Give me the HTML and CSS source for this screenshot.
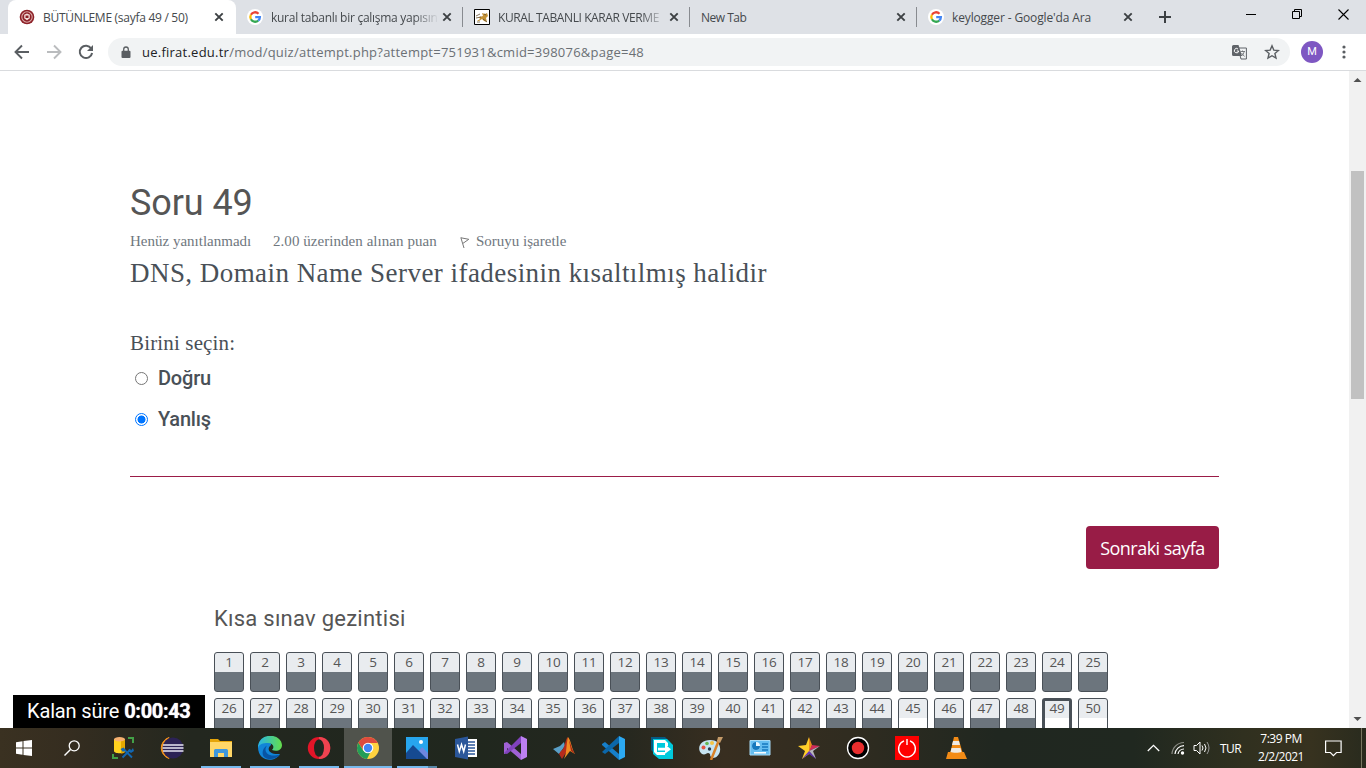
FILE: index.html
```
<!DOCTYPE html>
<html lang="tr">
<head>
<meta charset="utf-8">
<title>BÜTÜNLEME (sayfa 49 / 50)</title>
<link rel="stylesheet" href="styles.css">
</head>
<body>
<svg width="0" height="0" class="defs">
  <defs>
    <symbol id="x" viewBox="0 0 10 10"><path d="M1.3 1.3l7.4 7.4M8.7 1.3L1.3 8.7" stroke="#3c4043" stroke-width="1.9"/></symbol>
    <symbol id="google" viewBox="0 0 16 16"><circle cx="8" cy="8" r="8" fill="#fff"/><g fill="none" stroke-width="2.3"><path d="M3.9 5.7A4.8 4.8 0 0 1 11.5 4.7" stroke="#ea4335"/><path d="M3.9 10.3a4.8 4.8 0 0 1 0-4.6" stroke="#fbbc05"/><path d="M11.2 11.6a4.8 4.8 0 0 1-7.3-1.3" stroke="#34a853"/><path d="M8.2 8.1h4.7c0 1.5-.6 2.7-1.7 3.5" stroke="#4285f4"/></g></symbol>
  </defs>
</svg>
<header class="tabs">
  <div class="tab active">
    <svg class="fav" viewBox="0 0 16 16"><circle cx="8" cy="8" r="7.3" fill="#8c2027"/><circle cx="8" cy="8" r="5.2" fill="none" stroke="#dcaaa9" stroke-width="1.1"/><path d="M5.2 5.8L8 4.6l2.8 1.2v3.4L8 11.3 5.2 9.200z" fill="#f5dfdc"/><path d="M6.500 6.500h3v2.500h-3z" fill="#8c2027"/></svg>
    <span class="title t1">BÜTÜNLEME (sayfa 49 / 50)</span><svg class="close"><use href="#x"/></svg>
  </div>
  <div class="tab"><svg class="fav"><use href="#google"/></svg><span class="title t2 fade">kural tabanlı bir çalışma yapısın</span><svg class="close"><use href="#x"/></svg></div>
  <div class="tab sep">
    <svg class="fav" viewBox="0 0 16 16"><path d="M.5.5h15v15H.5z" fill="#fff" stroke="#000"/><path d="M3 12l3-2-1-2 4-1-1-3 3 1 2-1 1 3-2 2 1 4-3-1-2-2-3 2z" fill="#c39238"/><path d="M2 7l4-2M2 9l5-1M9 10l4 3M10 5l2 1M3 13h3" stroke="#665030" stroke-width=".8" fill="none"/></svg>
    <span class="title t3 fade">KURAL TABANLI KARAR VERME</span><svg class="close"><use href="#x"/></svg>
  </div>
  <div class="tab sep blank"><span class="title t4">New Tab</span><svg class="close"><use href="#x"/></svg></div>
  <div class="tab sep"><svg class="fav"><use href="#google"/></svg><span class="title t5">keylogger - Google'da Ara</span><svg class="close"><use href="#x"/></svg></div>
  <div class="newtab"><svg width="12" height="12" viewBox="0 0 12 12"><path d="M6 0v12M0 6h12" stroke="#3c4043" stroke-width="2"/></svg></div>
  <div class="winctl">
    <svg width="11" height="11"><path d="M0 5.500h10" stroke="#000"/></svg>
    <svg width="11" height="11"><path d="M.5 2.500h7v7h-7zM2.500 2.500v-2h7v7h-2" fill="none" stroke="#000"/></svg>
    <svg width="11" height="11"><path d="M.5.5l10 10M10.500.5l-10 10" stroke="#000" stroke-width="1.100"/></svg>
  </div>
</header>
<div class="toolbar">
  <div class="navs">
    <svg width="16" height="16" viewBox="0 0 16 16"><path d="M15 8H2M8 1.500L1.500 8 8 14.500" fill="none" stroke="#5a5e62" stroke-width="1.900"/></svg>
    <svg width="16" height="16" viewBox="0 0 16 16"><path d="M1 8h13M8 1.500L14.500 8 8 14.500" fill="none" stroke="#babcbe" stroke-width="1.900"/></svg>
    <svg width="16" height="16" viewBox="0 0 16 16"><path d="M13.200 4.500A6.200 6.200 0 1 0 14.100 9" fill="none" stroke="#5a5e62" stroke-width="2"/><path d="M15 1v6H9z" fill="#5a5e62"/></svg>
  </div>
  <div class="omni">
    <svg class="lock" width="10" height="13" viewBox="0 0 10 13"><path d="M2.700 6V3.300a2.300 2.300 0 0 1 4.600 0V6" fill="none" stroke="#5a5e62" stroke-width="1.300"/><rect x=".5" y="4.800" width="9" height="7.200" rx="1" fill="#5a5e62"/></svg>
    <span class="url"><b>ue.firat.edu.tr</b>/mod/quiz/attempt.php?attempt=751931&amp;cmid=398076&amp;page=48</span>
    <svg class="translate" width="15" height="15" viewBox="0 0 15 15"><path d="M6 3h8.400v11H9z" fill="#f1f3f4" stroke="#5f6368"/><path d="M1.500 0h5l3.500 11H1.500A1.500 1.500 0 0 1 0 9.500v-8A1.500 1.500 0 0 1 1.500 0z" fill="#5f6368"/><path d="M6 4a2.200 2.200 0 1 0 .7 2H4.800" fill="none" stroke="#fff"/><path d="M8.500 6.500h4.500M10.500 5.500v1M12 6.500c0 2-1.500 3.500-2.500 4.500M9.500 8l3 3.500" fill="none" stroke="#5f6368" stroke-width=".8"/></svg>
    <svg width="16" height="16" viewBox="0 0 16 16"><path d="M8 1.800l1.800 4.300 4.600.4-3.500 3 1.100 4.600L8 11.700l-4 2.400 1.100-4.600-3.500-3 4.600-.4z" fill="none" stroke="#5a5e62" stroke-width="1.400"/></svg>
  </div>
  <span class="avatar">M</span>
  <svg class="dots" width="4" height="14"><g fill="#5a5e62"><circle cx="2" cy="2" r="1.600"/><circle cx="2" cy="7" r="1.600"/><circle cx="2" cy="12" r="1.600"/></g></svg>
</div>
<div class="view">
  <main class="page">
    <h2 class="qno">Soru 49</h2>
    <div class="info"><span class="i1">Henüz yanıtlanmadı</span><span class="i2">2.00 üzerinden alınan puan</span><svg class="flag" width="10" height="13" viewBox="0 0 10 13"><path d="M.8 1.500L4 12M1 1.800l7.800 1.500L3 7.300" fill="none" stroke="#777" stroke-width="1"/></svg><span class="i3">Soruyu işaretle</span></div>
    <p class="question">DNS, Domain Name Server ifadesinin kısaltılmış halidir</p>
    <p class="prompt">Birini seçin:</p>
    <label class="opt"><i class="radio"></i><span class="o1">Doğru</span></label>
    <label class="opt"><i class="radio on"></i><span class="o2">Yanlış</span></label>
    <div class="rule"></div>
    <div class="actions"><button class="next">Sonraki sayfa</button></div>
    <section class="quiznav">
      <h3 class="navtitle">Kısa sınav gezintisi</h3>
      <div class="grid">
        <a>1</a><a>2</a><a>3</a><a>4</a><a>5</a><a>6</a><a>7</a><a>8</a><a>9</a><a>10</a><a>11</a><a>12</a><a>13</a><a>14</a><a>15</a><a>16</a><a>17</a><a>18</a><a>19</a><a>20</a><a>21</a><a>22</a><a>23</a><a>24</a><a>25</a>
        <a>26</a><a>27</a><a>28</a><a>29</a><a>30</a><a>31</a><a>32</a><a>33</a><a>34</a><a>35</a><a>36</a><a>37</a><a>38</a><a>39</a><a>40</a><a>41</a><a>42</a><a>43</a><a>44</a><a class="open">45</a><a>46</a><a>47</a><a>48</a><a class="open current">49</a><a class="open">50</a>
      </div>
    </section>
  </main>
  <div class="scroll">
    <svg width="17" height="17"><path d="M4.500 11h8L8.500 7z" fill="#505050"/></svg>
    <div class="track"><div class="thumb"></div></div>
    <svg width="17" height="17"><path d="M4.500 6h8l-4 4z" fill="#505050"/></svg>
  </div>
  <div class="timer"><span class="k">Kalan süre</span><b>0:00:43</b></div>
</div>
<footer class="taskbar">
  <div class="item start"><svg width="16" height="16" viewBox="0 0 16 16"><path d="M0 2.200L6.500 1.300v6.200H0zM7.500 1.100L16 0v7.500H7.500zM0 8.500h6.500v6.200L0 13.800zM7.500 8.500H16V16l-8.500-1.100z" fill="#fff"/></svg></div>
  <div class="item search"><svg width="16" height="16" viewBox="0 0 16 16"><circle cx="10.200" cy="5.800" r="5" fill="none" stroke="#fff" stroke-width="1.300"/><path d="M6.500 9.500L.5 15.500" stroke="#fff" stroke-width="1.400"/></svg></div>
  <div class="item"><svg viewBox="0 0 24 24"><path d="M3 3v12c0 3 11 3 11 0V3z" fill="#ffd21e"/><path d="M10 3h4v13c-1 1-3 1.500-4 1.500z" fill="#e5a900"/><ellipse cx="8.500" cy="3.300" rx="5.500" ry="2.200" fill="#f6b070"/><path d="M17 2h5v5M2 18v4h5" fill="none" stroke="#43a047" stroke-width="2"/><path d="M11.500 21.500l8-8M13 13.500l8 8" stroke="#1268b3" stroke-width="1.900"/><path d="M9.500 13l3-1.500 2 2-2.500 2.500zM18 13l2 1.500 2-2.500 1 3-3 2-3-2z" fill="#1268b3"/></svg></div>
  <div class="item"><svg viewBox="0 0 24 24"><path d="M9 1.500a11 11 0 0 0 0 21C3 17 3 7 9 1.500z" fill="#f7941e" stroke="#f7941e"/><circle cx="13" cy="12" r="10.500" fill="#2c2255"/><path d="M3 9h20.500M2.500 12h21M3 15h20.500" stroke="#e8e6f2" stroke-width="1.600"/></svg></div>
  <div class="item run"><svg viewBox="0 0 24 24"><path d="M1 3h8l2 2h12v16H1z" fill="#e5a50a"/><path d="M1 6h22v15H1z" fill="#ffd768"/><path d="M5 21v-6.500q0-1.500 1.500-1.500h11q1.500 0 1.500 1.500V21h-4v-4H9v4z" fill="#3e97dd"/></svg></div>
  <div class="item run"><svg viewBox="0 0 24 24"><defs><linearGradient id="eg" x2="1"><stop stop-color="#28b5e8"/><stop offset="1" stop-color="#64dd4b"/></linearGradient></defs><path d="M0 11c1-6 14-7 13-2-5 4-2 10 9 9-5 9-22 8-22-7z" fill="#1185d8"/><path d="M0 10C2-4 23-3 24 9c0 5-5 7-10 5 3-3 1-7-4-7C5 7 1 8 0 12z" fill="url(#eg)"/><path d="M9 9.500c-4 5 0 13 13 9-5 7-20 6-17-4 .5-2 2-4 4-5z" fill="#0754a4"/></svg></div>
  <div class="item run"><svg viewBox="0 0 24 24"><ellipse cx="12" cy="12" rx="11.200" ry="11" fill="#e31528"/><path d="M12 1c15 0 15 22 0 22z" fill="#ef4350"/><ellipse cx="12" cy="12" rx="5" ry="8.700" fill="#202720"/></svg></div>
  <div class="item run focus"><svg viewBox="0 0 24 24"><circle cx="12" cy="12" r="11" fill="#ffd23f"/><path d="M2.300 6.800A11 11 0 0 1 21.800 7H12L7.500 14.500z" fill="#dd4b3e"/><path d="M2.300 6.800L7.500 15h7.500l-4 8A11 11 0 0 1 2.300 6.800z" fill="#239d58"/><circle cx="12" cy="12" r="5.300" fill="#fff"/><circle cx="12" cy="12" r="4.200" fill="#4285f4"/></svg></div>
  <div class="item run photos"><svg viewBox="0 0 24 24"><path d="M1 1h22v22H1z" fill="#27a6ee"/><path d="M12 17l5-6 6 6v6H12z" fill="#6e87df"/><path d="M1 17l7-8 14 14H1z" fill="#164a91"/><circle cx="16" cy="6" r="2" fill="#fff"/></svg></div>
  <div class="item"><svg viewBox="0 0 24 24"><path d="M12 3h11v18H12z" fill="#fff"/><path d="M14 6h7M14 9h7M14 12h7M14 15h7M14 18h7" stroke="#2b579a" stroke-width="1.300"/><path d="M1 3l13-2.500v23L1 21z" fill="#2b579a"/><path d="M3.500 8.500l1.800 7 2.200-7 2.200 7 1.800-7" fill="none" stroke="#fff" stroke-width="1.500"/></svg></div>
  <div class="item"><svg viewBox="0 0 24 24"><path d="M1 7l3-1 14 12V24L4 12v5l-3 1z" fill="#a061d6"/><path d="M1 17l17-17v7L4 18z" fill="#8042bd"/><path d="M18 0l6 3v18l-6 3z" fill="#bc80f2"/></svg></div>
  <div class="item"><svg viewBox="0 0 24 24"><path d="M1 13l7-3 4-4 1 4-6 8z" fill="#5a9fc7"/><path d="M9 15c4-2 4-12 7-14l-1 14-5 8-3-5z" fill="#b52b1c"/><path d="M16 1c3 3 4 13 7 17l-5-3-6 8c3-6 2-15 4-22z" fill="#f28b23"/><path d="M17 4c2 4 2 8 6 14l-4-3z" fill="#a92a17"/></svg></div>
  <div class="item"><svg viewBox="0 0 24 24"><path d="M1 8l3-2 14 12v6L1 9z" fill="#167fca"/><path d="M1 16L18 0v7L4 18z" fill="#0b67aa"/><path d="M18 0l6 3v18l-6 3z" fill="#2ca9f2"/></svg></div>
  <div class="item"><svg viewBox="0 0 24 24"><path d="M1 1h14l5 5v12H5l-4-4z" fill="#075982"/><path d="M3 3h14l6 6v14H9l-6-5z" fill="#00c9dc"/><path d="M4 4h11l3 3v3h-3V7H7v9h8v3H7l-3-3z" fill="#fff"/><path d="M8 11.800h7V8.500l6 4.700-6 4.600v-3.200H8z" fill="#fff"/></svg></div>
  <div class="item"><svg viewBox="0 0 24 24"><path d="M11 4C1 4-3 13 3 18c4 2 5-3 8 0 0 7 9 4 10-3S18 4 11 4z" fill="#c6e4f2"/><circle cx="8" cy="7.500" r="1.800" fill="#65b753"/><circle cx="13" cy="7" r="2" fill="#f4c445"/><circle cx="4.500" cy="11.500" r="2" fill="#e55443"/><circle cx="10.500" cy="13" r="1.700" fill="#26384a"/><path d="M20 4l-8 20" stroke="#d78128" stroke-width="2.500"/><path d="M18 5l1-4 5 0-3 6z" fill="#c59b69"/></svg></div>
  <div class="item"><svg viewBox="0 0 24 24"><path d="M2 4.500h20v14.500H2z" fill="#65bdf0" stroke="#a9dcf7"/><circle cx="8" cy="10" r="4" fill="#e8f6ff"/><path d="M8 10V6a4 4 0 1 0 4 4z" fill="#1678be"/><path d="M14 8h6M14 11h6M14 14h6" stroke="#1678be" stroke-width="1.300"/><path d="M6 16.800h12" stroke="#fff" stroke-width="1.500"/></svg></div>
  <div class="item"><svg viewBox="0 0 24 24"><path d="M12 1l-3 8-8 1 7 5-3 8 7-5z" fill="#ffcf29"/><path d="M12 1l3 8-3 9z" fill="#e88c1d"/><path d="M15 9l8 1-11 5z" fill="#cf2b59"/><path d="M23 10l-7 5 3 8-7-8z" fill="#b7b5be"/><path d="M12 15l7 8-7-5-7 5z" fill="#6335bc"/></svg></div>
  <div class="item"><svg viewBox="0 0 24 24"><circle cx="12" cy="12" r="10.500" fill="#000" stroke="#fff" stroke-width="1.300"/><circle cx="12" cy="12" r="6.200" fill="#e72d2d"/></svg></div>
  <div class="item"><svg viewBox="0 0 24 24"><path d="M0 0h24v24H0z" fill="#fe0000"/><path d="M9 4.800a8.400 8.400 0 1 0 6 0M12 3v6" fill="none" stroke="#fff" stroke-width="1.400"/></svg></div>
  <div class="item"><svg viewBox="0 0 24 24"><path d="M4 16h16l3 7H2z" fill="#f28b16"/><path d="M10 1h4l5 17c-2 2-11 2-13 0z" fill="#f28b16"/><path d="M9 5h6l1 4H8zM7.500 12h9l1 4c-2 1-9 1-11 0z" fill="#eeeae4"/></svg></div>
  <div class="tray">
    <svg width="13" height="8"><path d="M.8 7l5.700-5.700L12.200 7" fill="none" stroke="#fff" stroke-width="1.300"/></svg>
    <svg class="wifi" width="14" height="14"><g fill="none" stroke-width="1.200"><path d="M1 13A12 12 0 0 1 13 1.500" stroke="#8b8c85"/><path d="M4 13A9 9 0 0 1 13 4.700M7 13a6 6 0 0 1 6-5" stroke="#fff"/></g><circle cx="11.500" cy="12" r="1.700" fill="#fff"/></svg>
    <svg class="vol" width="17" height="14"><path d="M1 4.500h2.500L7 1v12L3.500 9.500H1z" fill="none" stroke="#fff"/><path d="M9 4.500q2 2.500 0 5M11.500 3q3 4 0 8" fill="none" stroke="#fff"/><path d="M14 1q4 6 0 12" fill="none" stroke="#999"/></svg>
    <span class="lang">TUR</span>
    <div class="clock"><span class="time">7:39 PM</span><span class="date">2/2/2021</span></div>
    <svg class="note" width="17" height="17"><path d="M.6 1h15.500v11.500h-4.600L8.400 15.600l-3-3.100H.6z" fill="none" stroke="#fff" stroke-width="1.200"/></svg>
    <i class="peek"></i>
  </div>
</footer>
</body>
</html>
```
FILE: styles.css
```
* { box-sizing: border-box; }
body { margin: 0; width: 1366px; height: 768px; overflow: hidden; display: flex; flex-direction: column; background: #fff; font-family: "Open Sans", sans-serif; color: #495057; }
.defs { position: absolute; }
svg { flex: none; display: block; }
span, b { white-space: nowrap; }

.tabs { height: 34px; flex: none; display: flex; background: #dee1e6; padding-left: 8px; }
.tab { width: 227px; height: 34px; display: flex; align-items: center; padding: 0 11px 0 11px; position: relative; font-size: 12px; color: #45494d; }
.tab.active { width: 228px; padding-right: 12px; background: #fff; border-radius: 8px 8px 0 0; }
.tab.sep::before { content: ""; position: absolute; left: -1px; top: 7px; width: 1px; height: 20px; background: #888b90; }
.fav { width: 16px; height: 16px; margin-right: 8px; }
.title { flex: 1; overflow: hidden; margin-right: 3px; }
.fade { -webkit-mask-image: linear-gradient(to right, #000 85%, transparent); mask-image: linear-gradient(to right, #000 85%, transparent); }
.close { width: 10px; height: 10px; }
.t1 { letter-spacing: -.28px; }
.t2 { letter-spacing: -.27px; }
.t3 { letter-spacing: -.4px; }
.t4 { letter-spacing: -.5px; }
.t5 { letter-spacing: -.14px; }
.newtab { width: 46px; padding: 11px 0 0 15px; }
.winctl { display: flex; flex: 1; justify-content: flex-end; gap: 35px; padding: 9px 17px 0 0; }

.toolbar { height: 37px; flex: none; display: flex; align-items: center; border-bottom: 1px solid #d9dbde; background: #fff; padding-left: 14px; }
.navs { display: flex; gap: 16px; width: 94px; }
.omni { width: 1182px; height: 28px; border-radius: 14px; background: #f1f3f4; display: flex; align-items: center; padding: 0 10px 0 13px; }
.url { flex: 1; margin-left: 11px; font-size: 13px; letter-spacing: .24px; color: #6b7075; }
.url b { font-weight: 400; color: #202124; }
.translate { margin-right: 17px; }
.avatar { width: 22px; height: 22px; margin-left: 11px; border-radius: 50%; background: #7e57c2; color: #fff; font: 11px/22px Roboto, sans-serif; text-align: center; }
.dots { margin-left: 19px; }

.view { flex: 1; min-height: 0; display: flex; position: relative; overflow: hidden; }
.page { width: 1349px; padding: 110px 130px 0; overflow: hidden; }
.qno { margin: 0; font: 400 36px/44px Roboto, sans-serif; letter-spacing: -.1px; color: #555; }
.info { display: flex; align-items: center; height: 18px; margin-top: 7px; font: 15px/18px "Liberation Serif", serif; color: #6f777e; }
.i1 { width: 121px; }
.i2 { width: 165px; margin: 0 22px; letter-spacing: .05px; }
.flag { margin-top: 3px; }
.i3 { margin-left: 6px; }
.question { margin: 6px 0 0; font: 27px/34px "Liberation Serif", serif; letter-spacing: .45px; white-space: nowrap; }
.prompt { margin: 40px 0 10px; font: 21px/26px "Liberation Serif", serif; letter-spacing: .15px; }
.opt { display: flex; align-items: center; height: 25px; margin-bottom: 16px; padding-left: 5px; font: 500 20px/25px Roboto, sans-serif; letter-spacing: -.2px; }
.radio { width: 13px; height: 13px; margin-right: 10px; border: 1px solid #767676; border-radius: 50%; }
.radio.on { border-color: #0075ff; background: radial-gradient(circle, #0075ff 0 3.700px, #fff 4.300px); }
.rule { height: 1px; margin: 44px 0 49px; background: #9b1c47; }
.actions { display: flex; justify-content: flex-end; }
.next { width: 133px; height: 43px; padding: 0; border: 0; border-radius: 4px; background: #981c46; color: #fff; font: 18px "Open Sans", sans-serif; letter-spacing: -.52px; }
.quiznav { padding-left: 84px; }
.navtitle { margin: 36px 0 19px; font: 400 22px/28px Roboto, sans-serif; letter-spacing: .25px; color: #555; }
.grid { display: grid; grid-template-columns: repeat(25, 30px); gap: 6px; }
.grid a { height: 40px; border: 1px solid #495057; border-radius: 3px; background: linear-gradient(#e9ecef 19px, #6c757d 19px); font-size: 13.500px; line-height: 18px; text-align: center; color: #555; letter-spacing: -.2px; }
.grid a.open { background: linear-gradient(#e9ecef 19px, #fff 19px); }
.grid a.current { border-width: 3px; line-height: 14px; background: linear-gradient(#e9ecef 17px, #fff 17px); }
.scroll { width: 17px; background: #f1f1f1; display: flex; flex-direction: column; }
.track { flex: 1; padding: 83px 2px 0; }
.thumb { width: 13px; height: 228px; background: #c1c1c1; }
.timer { position: absolute; left: 13px; bottom: 0; width: 192px; height: 33px; background: #000; color: #fff; display: flex; gap: 5px; padding-left: 14px; font: 20px/33px Roboto, sans-serif; }
.timer .k { letter-spacing: -.15px; }
.timer b { letter-spacing: -.35px; text-shadow: 0 0 1px #fff; }

.taskbar { height: 40px; flex: none; display: flex; background: linear-gradient(90deg, #3a3121 0, #352d20 5%, #23271f 14%, #20271e 35%, #24271f 45%, #382e20 53%, #302c20 62%, #202720 73%, #202820 83%, #30301f 91%, #37321f 96%, #292b1e); }
.item { width: 49px; height: 40px; flex: none; display: flex; align-items: center; justify-content: center; position: relative; }
.item svg:not([width]) { width: 24px; height: 24px; }
.item.start { width: 48px; }
.item.search { width: 50px; padding-right: 2px; }
.item.run::after { content: ""; position: absolute; left: 5px; bottom: 0; width: 40px; height: 2px; background: #76b9ed; }
.item.focus { width: 48px; margin-left: 1px; background: #50534c; }
.item.focus::after { left: 0; width: 48px; }
.item.photos::after { background: linear-gradient(90deg, #76b9ed 31px, #5887a8 31px); }
.tray { flex: 1; display: flex; align-items: center; justify-content: flex-end; color: #fff; font-size: 12px; }
.wifi { margin-left: 11px; }
.vol { margin-left: 8px; }
.lang { margin-left: 10px; width: 22px; letter-spacing: -.6px; }
.clock { width: 50px; margin-left: 14px; display: flex; flex-direction: column; align-items: center; line-height: 18px; letter-spacing: -.5px; }
.note { margin-left: 19px; }
.peek { width: 1px; height: 40px; margin: 0 4px 0 19px; background: #777761; }
```
